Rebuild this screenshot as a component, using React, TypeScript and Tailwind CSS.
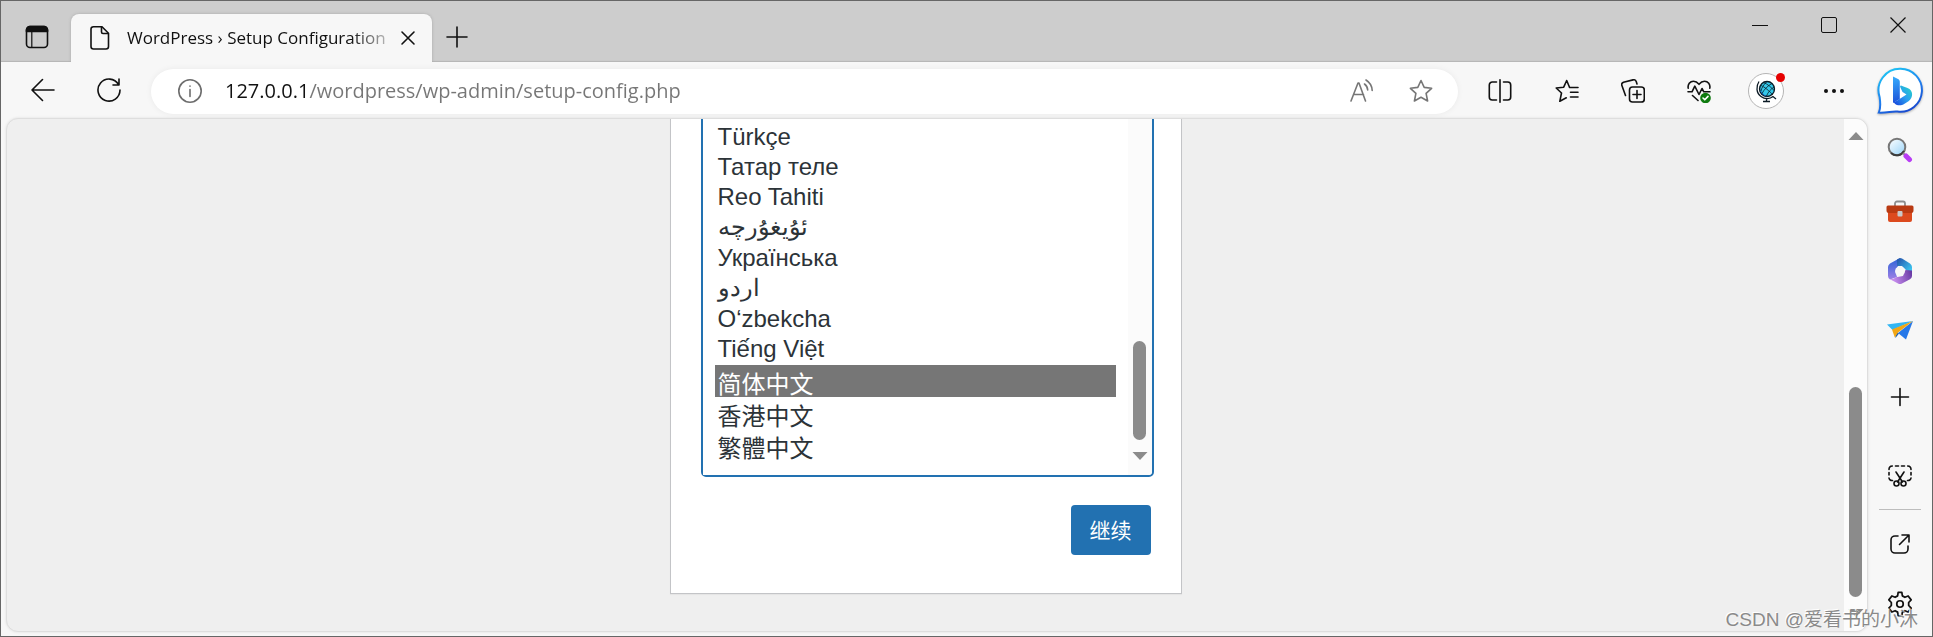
import type { ReactNode } from "react";

const LANGUAGES = [
  { code: "tr", name: "Türkçe", row: "h-[30px] leading-[30px]" },
  { code: "tt", name: "Татар теле", row: "h-[30px] leading-[30px]" },
  { code: "ty", name: "Reo Tahiti", row: "h-[30px] leading-[30px]" },
  { code: "ug", name: "ئۇيغۇرچە", row: "h-[31px] leading-[30px]" },
  { code: "uk", name: "Українська", row: "h-[30px] leading-[30px]" },
  { code: "ur", name: "اردو", row: "h-[31px] leading-[30px]" },
  { code: "uz", name: "O‘zbekcha", row: "h-[30px] leading-[30px]" },
  { code: "vi", name: "Tiếng Việt", row: "h-[30px] leading-[30px]" },
  { code: "zh-CN", name: "简体中文", row: "h-8 leading-7" },
  { code: "zh-HK", name: "香港中文", row: "h-8 leading-7" },
  { code: "zh-TW", name: "繁體中文", row: "h-8 leading-7" },
];

interface IconButtonProps {
  label: string;
  className?: string;
  children: ReactNode;
}

function IconButton({ label, className = "", children }: IconButtonProps) {
  return (
    <button
      type="button"
      aria-label={label}
      className={`flex shrink-0 items-center justify-center ${className}`}
    >
      {children}
    </button>
  );
}

interface LineIconProps {
  className?: string;
  children: ReactNode;
}

function LineIcon({ className = "size-6", children }: LineIconProps) {
  return (
    <svg
      viewBox="0 0 24 24"
      fill="none"
      stroke="currentColor"
      strokeWidth="1.6"
      strokeLinecap="round"
      strokeLinejoin="round"
      className={className}
    >
      {children}
    </svg>
  );
}

function TabStrip() {
  return (
    <header className="flex h-[61px] shrink-0 bg-[#cdcdcd] shadow-[inset_0_-2px_1px_-1px_#b5b5b5]">
      <IconButton label="Tab actions" className="mt-3 h-12 w-[70px] pl-[2px]">
        <LineIcon>
          <rect x="1.5" y="1.5" width="21" height="21" rx="3.5" />
          <path d="M1.500 6.500h21V5A3.500 3.500 0 0 0 19 1.500H5A3.500 3.500 0 0 0 1.500 5z" fill="currentColor" />
          <path d="M6.800 7v15.500" strokeWidth="1.200" />
        </LineIcon>
      </IconButton>

      <div className="mt-[13px] flex h-12 w-[361px] items-center rounded-t-lg bg-[#f7f7f7] pr-[10px] pl-[17px] shadow-[0_0_3px_#a8a8a8] [clip-path:inset(-4px_-4px_0_-4px)]">
        <LineIcon>
          <path d="M5.5 0.800h8.500l6.500 6.500v13.200A2.500 2.500 0 0 1 18 23H5.500A2.500 2.500 0 0 1 3 20.500V3.300A2.500 2.500 0 0 1 5.500 0.800z" />
          <path d="M13.500 1v5a1.500 1.500 0 0 0 1.500 1.500h5" />
        </LineIcon>
        <span className="ml-[15px] flex-1 overflow-hidden text-[17px] leading-6 whitespace-nowrap text-[#111] [mask-image:linear-gradient(90deg,#000_84%,transparent_102%)]">
          WordPress › Setup Configuration
        </span>
        <IconButton label="Close tab" className="size-7">
          <LineIcon className="size-6">
            <path d="M6 6l12 12M18 6L6 18" />
          </LineIcon>
        </IconButton>
      </div>

      <IconButton label="New tab" className="mt-3 h-12 w-[50px]">
        <LineIcon>
          <path d="M12 2v20M2 12h20" />
        </LineIcon>
      </IconButton>

      <div className="ml-auto flex h-12">
        <IconButton label="Minimize" className="w-[69px]">
          <svg viewBox="0 0 16 16" stroke="currentColor" className="size-4">
            <path d="M0 8.500h16" />
          </svg>
        </IconButton>
        <IconButton label="Maximize" className="w-[69px]">
          <svg viewBox="0 0 16 16" fill="none" stroke="currentColor" className="size-4">
            <rect x="0.500" y="0.500" width="15" height="15" rx="1.500" />
          </svg>
        </IconButton>
        <IconButton label="Close window" className="w-[69px]">
          <svg viewBox="0 0 16 16" stroke="currentColor" strokeWidth="1.200" className="size-4">
            <path d="M0.500 0.500l15 15M15.500 0.500l-15 15" />
          </svg>
        </IconButton>
      </div>
    </header>
  );
}

function GlobeAvatar() {
  return (
    <svg viewBox="0 0 24 24" fill="none" className="size-6">
      <circle cx="13" cy="10" r="7.500" fill="#35c9ea" stroke="#0b1a24" strokeWidth="1.300" />
      <path d="M6 9c1 4 4 8 8 8-4 1-8-3-8-8z" fill="#0a5fc4" />
      <path d="M7 6.500c3 1 9 6 11.500 9M9.500 3.500c4 1.500 8 5 10.500 8M18 4.500c-4 2-8 6-10 10M12.500 3c-3 3-5 6-5.500 9M20 8c-3 2-6 5-7.500 9" stroke="#0b1a24" strokeWidth="0.800" />
      <path d="M5 2.500C2 7 2 14 7 17.500c4 3 9 2.500 12 0L22 20M12.500 19.500V22M9 22.500h7" stroke="#0b1a24" strokeWidth="1.300" />
    </svg>
  );
}

function BingLogo() {
  return (
    <svg viewBox="0 0 46 48" fill="none" className="h-12 w-[46px] drop-shadow-[0_1px_1px_rgba(0,0,0,0.3)]">
      <defs>
        <linearGradient id="bubble" x1="8" y1="2" x2="30" y2="46" gradientUnits="userSpaceOnUse">
          <stop stopColor="#1cc8f5" />
          <stop offset="0.550" stopColor="#2080ee" />
          <stop offset="1" stopColor="#1747cf" />
        </linearGradient>
        <linearGradient id="stem" x1="16" y1="8" x2="22" y2="38" gradientUnits="userSpaceOnUse">
          <stop stopColor="#38b2ff" />
          <stop offset="1" stopColor="#1b4ad5" />
        </linearGradient>
        <linearGradient id="bowl" x1="16" y1="36" x2="36" y2="20" gradientUnits="userSpaceOnUse">
          <stop stopColor="#1746dc" />
          <stop offset="0.500" stopColor="#2a9df0" />
          <stop offset="1" stopColor="#23d6c4" />
        </linearGradient>
      </defs>
      <path
        d="M23.500 1.800a21.500 21.500 0 1 1-3 42.800c-5-0.600-11 1.400-18.700 1C4 41 3.500 36 2.600 30A21.500 21.500 0 0 1 23.500 1.800z"
        fill="#fff"
        stroke="url(#bubble)"
        strokeWidth="2"
      />
      <path d="M16 9.500l5 2.500c1.200 0.700 1.800 1.600 1.800 3V32L16 36z" fill="url(#stem)" />
      <path d="M16 32c0 6 6.500 8 11.500 4.800l4-2.600c5-3.600 5-11-1-13.200l-6-2.300c-1.300-0.400-1.600 0.600-1.200 1.600l2.200 4.800 4 2.400-9.700 6.300C17.500 35.200 16 34 16 32z" fill="url(#bowl)" />
    </svg>
  );
}

function Toolbar() {
  return (
    <div className="flex h-14 shrink-0 items-center pt-[2px]">
      <IconButton label="Back" className="h-10 w-[84px] pb-[2px]">
        <LineIcon>
          <path d="M23 12H1M11.500 1.500L1 12l10.500 10.500" />
        </LineIcon>
      </IconButton>
      <IconButton label="Refresh" className="mr-[18px] h-10 w-12 pb-[2px]">
        <LineIcon>
          <path d="M21.500 6.500A11 11 0 1 0 23 12M22 1v6h-6" />
        </LineIcon>
      </IconButton>

      <div className="flex h-[45px] flex-1 items-center rounded-full bg-white pr-2 pl-[27px] shadow-[0_0_6px_rgba(0,0,0,0.06)]">
        <LineIcon className="size-6 text-[#6d6d6d]">
          <circle cx="12" cy="12" r="11.200" />
          <path d="M12 10.500v7M12 7v0.200" />
        </LineIcon>
        <input
          type="text"
          aria-label="Address"
          defaultValue="127.0.0.1/wordpress/wp-admin/setup-config.php"
          className="ml-[23px] min-w-0 flex-1 bg-[linear-gradient(90deg,#111_83px,#767676_83px)] bg-clip-text text-xl leading-7 text-transparent outline-none"
        />
        <IconButton label="Read aloud" className="w-[59px] text-[#767676]">
          <LineIcon>
            <path d="M1 22L8 4h1l6.500 18M3.500 15.500h10M14.500 5c2 1.500 3 3.500 3.200 6M16 1c4 2.500 6 6 6.200 10.500" />
          </LineIcon>
        </IconButton>
        <IconButton label="Add to favorites" className="w-[59px] text-[#767676]">
          <LineIcon>
            <path d="M12 1.500l3.200 6.900 7.400 0.900-5.500 5.100 1.500 7.600L12 18.300 5.400 22l1.500-7.600L1.400 9.300l7.400-0.900z" />
          </LineIcon>
        </IconButton>
      </div>

      <div className="ml-2 flex">
        <IconButton label="Split screen" className="w-[67px]">
          <LineIcon>
            <path d="M12 0.800v22.400M8.500 3H4.300A3 3 0 0 0 1.300 6v12a3 3 0 0 0 3 3h4.200M15.500 3h4.200a3 3 0 0 1 3 3v12a3 3 0 0 1-3 3h-4.200" />
          </LineIcon>
        </IconButton>
        <IconButton label="Favorites" className="w-[67px]">
          <LineIcon>
            <path d="M14.500 8.300L11.700 1.500 8.700 8.200 1.200 9l5.300 5-1.700 8.300 6.500-3.500M14.500 8.500H23M15.500 13.200H23M15.500 18H23" />
          </LineIcon>
        </IconButton>
        <IconButton label="Collections" className="w-[66px]">
          <LineIcon>
            <rect x="8.500" y="8" width="14.800" height="15" rx="3" />
            <path d="M16 11.500v8M12 15.500h8M4.500 16.500L0.900 6.600C0.300 5 1 3.800 2.500 3.200L12 0.900c1.700-0.400 2.800 0.300 3.300 1.800l0.700 2.200" />
          </LineIcon>
        </IconButton>
        <IconButton label="Browser essentials" className="w-[66px]">
          <LineIcon>
            <path d="M1.200 9.200C0.500 5.500 3 2.300 6.500 2.300c2.300 0 4 1.200 5.500 3 1.500-1.800 3.200-3 5.500-3 3.500 0 6 3.200 5.300 6.900M1 12.800h4l2.800-5.600L12 15.500l3-6 1.800 3.300H23M5.500 16.500L11 21.500" />
            <circle cx="18.500" cy="19" r="5.300" fill="#0f7b0f" stroke="none" />
            <path d="M16 19l1.800 1.800 3.200-3.400" stroke="#fff" />
          </LineIcon>
        </IconButton>
        <IconButton label="Profile" className="w-[68px]">
          <span className="relative flex size-9 items-center justify-center rounded-full border border-[#b5b5b5] bg-white">
            <GlobeAvatar />
            <span className="absolute -top-px -right-[2px] size-[9px] rounded-full bg-[#e60000]" />
          </span>
        </IconButton>
        <IconButton label="Settings and more" className="w-[68px]">
          <svg viewBox="0 0 24 24" fill="currentColor" className="size-6">
            <circle cx="4" cy="12" r="2" />
            <circle cx="12" cy="12" r="2" />
            <circle cx="20" cy="12" r="2" />
          </svg>
        </IconButton>
        <IconButton label="Bing" className="w-16">
          <BingLogo />
        </IconButton>
      </div>
    </div>
  );
}

function LanguageForm() {
  return (
    <form className="w-[512px] shrink-0 border border-[#c3c4c7] bg-white pr-[27px] pb-[38px] pl-[30px] shadow-[0_1px_1px_rgba(0,0,0,0.04)]">
      <div className="flex rounded-[5px] border-2 border-[#2271b1] pt-3">
        <select
          size={11}
          defaultValue="zh-CN"
          aria-label="Language"
          className="h-[352px] min-w-0 flex-1 overflow-hidden bg-white bg-none px-3 py-0 text-2xl text-[#2c3338] outline-none"
        >
          {LANGUAGES.map((language) => (
            <option
              key={language.code}
              value={language.code}
              className={`${language.row} px-[3px] py-0 checked:bg-[linear-gradient(#767676,#767676)] checked:[-webkit-text-fill-color:#fff]`}
            >
              {language.name}
            </option>
          ))}
        </select>
        <div className="-mt-3 flex w-6 flex-col items-center justify-end rounded-r bg-[#fbfbfb] pb-[15px]">
          <div className="h-[99px] w-[13px] rounded-full bg-[#8b8b8b]" />
          <svg viewBox="0 0 16 8" fill="#8b8b8b" className="mt-3 h-2 w-4">
            <path d="M0.500 0h15L8 8z" />
          </svg>
        </div>
      </div>
      <div className="mt-7 flex justify-end pr-[3px]">
        <button
          type="button"
          className="h-[50px] w-20 rounded bg-[#2271b1] pt-[2px] text-[21px] leading-7 text-white"
        >
          继续
        </button>
      </div>
    </form>
  );
}

function Page() {
  return (
    <main className="flex min-w-0 flex-1 overflow-hidden rounded-xl border border-[#dedede] bg-[#efefef] shadow-[0_0_3px_rgba(0,0,0,0.1)]">
      <div className="flex flex-1 flex-col items-center justify-end pb-[37px] font-['Liberation_Sans','Noto_Sans_CJK_SC',sans-serif]">
        <LanguageForm />
      </div>
      <div className="flex w-[23px] flex-col items-center bg-[#fcfcfc] pt-[13px] pb-[14px]">
        <svg viewBox="0 0 16 8" fill="#8b8b8b" className="h-2 w-4">
          <path d="M0.500 8h15L8 0z" />
        </svg>
        <div className="mt-auto h-[210px] w-[13px] rounded-full bg-[#8b8b8b]" />
        <svg viewBox="0 0 16 8" fill="#8b8b8b" className="mt-3 h-2 w-4">
          <path d="M0.500 0h15L8 8z" />
        </svg>
      </div>
    </main>
  );
}

function Sidebar() {
  return (
    <aside className="flex w-16 flex-col items-center pt-[14px] pb-[10px]">
      <IconButton label="Search" className="h-9">
        <svg viewBox="0 0 26 26" fill="none" className="size-[26px]">
          <defs>
            <linearGradient id="lens" x1="4" y1="4" x2="16" y2="18" gradientUnits="userSpaceOnUse">
              <stop stopColor="#f1faff" />
              <stop offset="1" stopColor="#9ed5f8" />
            </linearGradient>
          </defs>
          <circle cx="10" cy="10" r="8.300" fill="url(#lens)" stroke="#777" strokeWidth="2" />
          <path d="M4 16A8.300 8.300 0 0 0 17 14" stroke="#3c3c3c" strokeWidth="2" />
          <path d="M16 16l2.500 2.500" stroke="#888" strokeWidth="2" />
          <path d="M19 19l3.500 3.500" stroke="#b83df5" strokeWidth="5" strokeLinecap="round" />
        </svg>
      </IconButton>
      <IconButton label="Shopping" className="mt-[25px] h-9">
        <svg viewBox="0 0 28 28" className="size-7">
          <path d="M9 9V6.500a2 2 0 0 1 2-2h6a2 2 0 0 1 2 2V9" fill="none" stroke="#8d8d8d" strokeWidth="1.800" />
          <path d="M2 15h24v8a2 2 0 0 1-2 2H4a2 2 0 0 1-2-2z" fill="#dc4a1e" />
          <path d="M2 8.500h24a1.500 1.500 0 0 1 1.500 1.500v3.500A2.500 2.500 0 0 1 25 16H3a2.500 2.500 0 0 1-2.500-2.500V10A1.500 1.500 0 0 1 2 8.500z" fill="#b93a12" />
          <rect x="11.500" y="14" width="5" height="5.500" rx="1" fill="#c9c9c9" />
        </svg>
      </IconButton>
      <IconButton label="Microsoft 365" className="mt-6 h-9">
        <svg viewBox="0 0 24 26" className="h-[26px] w-6">
          <defs>
            <linearGradient id="m365a" x1="4" y1="2" x2="4" y2="24" gradientUnits="userSpaceOnUse">
              <stop stopColor="#3567d8" />
              <stop offset="1" stopColor="#ad82e8" />
            </linearGradient>
            <linearGradient id="m365b" x1="10" y1="2" x2="24" y2="14" gradientUnits="userSpaceOnUse">
              <stop stopColor="#275bb0" />
              <stop offset="1" stopColor="#3fd2f7" />
            </linearGradient>
            <linearGradient id="m365c" x1="6" y1="22" x2="24" y2="16" gradientUnits="userSpaceOnUse">
              <stop stopColor="#c58cec" />
              <stop offset="1" stopColor="#6a3ba5" />
            </linearGradient>
          </defs>
          <path d="M12 0L2 5.500Q0 7 0 9v9q0 2 2 3.500l7-2.500-2-6 3-5z" fill="url(#m365a)" />
          <path d="M12 0l-3 1.500V8l5 0 4 4 6 3V9q0-2-2-3.500L14 0.600Q13 0 12 0z" fill="url(#m365b)" />
          <path d="M24 12.500V18q0 2-2 3.200l-8 4.300q-2 1-4 0l-8-4.300q3 0.500 6-2l7-1.200 2.500-6z" fill="url(#m365c)" />
          <path d="M12 8.300l4 2.300v4.800l-4 2.300-4-2.300v-4.800z" fill="#f7f7f7" stroke="#f7f7f7" strokeLinejoin="round" />
        </svg>
      </IconButton>
      <IconButton label="Drop" className="mt-6 h-9">
        <svg viewBox="0 0 26 20" className="h-5 w-[26px]">
          <path d="M0 3.500L26 0 5.500 9z" fill="#32b5f2" />
          <path d="M26 0L19 18.500 11 12z" fill="#2678e8" />
          <path d="M8 10l4 2.500L8.500 17z" fill="#175cb5" />
          <path d="M26 0L5 8.500l2.800 8L11 11.500z" fill="#f2a614" />
        </svg>
      </IconButton>
      <IconButton label="Customize" className="mt-[30px] h-9">
        <LineIcon>
          <path d="M12 3.500v17M3.500 12h17" />
        </LineIcon>
      </IconButton>
      <IconButton label="Screenshot" className="mt-auto h-9">
        <LineIcon>
          <path d="M4.500 16.500A3 3 0 0 1 1 14M1 8.500v2.500M1 5.500A3.500 3.500 0 0 1 4.300 2M7.500 2h3M13.500 2h3M19.700 2A3.500 3.500 0 0 1 23 5.500M23 8.500v2.500M23 14a3 3 0 0 1-3.500 2.500M8 8l6.500 10M16 8L9.500 18" />
          <circle cx="8.500" cy="19.500" r="2.500" />
          <circle cx="15.500" cy="19.500" r="2.500" />
        </LineIcon>
      </IconButton>
      <hr className="mt-[15px] w-[42px] border-[#bdbdbd]" />
      <IconButton label="Open in new window" className="mt-4 h-9">
        <LineIcon>
          <path d="M10 4H7a4 4 0 0 0-4 4v9a4 4 0 0 0 4 4h9a4 4 0 0 0 4-4v-3M14 3h7v7M21 3L11.500 12.500" />
        </LineIcon>
      </IconButton>
      <IconButton label="Settings" className="mt-6 h-9">
        <LineIcon className="size-[26px]">
          <path d="M9.800 4.500L10.300 1.300h3.400l0.500 3.200 2.300 1.300 3-1.200 2.800 3.600-2.300 2.400v2.800l2.300 2.400-2.800 3.600-3-1.200-2.300 1.300-0.500 3.200h-3.400l-0.500-3.200-2.300-1.300-3 1.200-2.800-3.600 2.300-2.400v-2.800L1.700 8.200l2.800-3.600 3 1.200z" />
          <circle cx="12" cy="12" r="3" />
        </LineIcon>
      </IconButton>
    </aside>
  );
}

export default function App() {
  return (
    <div className="relative flex h-screen flex-col overflow-hidden border border-[#666] bg-[#f7f7f7] font-['Open_Sans','Noto_Sans_CJK_SC',sans-serif] text-[#111]">
      <TabStrip />
      <Toolbar />
      <div className="flex min-h-0 flex-1 pb-[4px] pl-[5px]">
        <Page />
        <Sidebar />
      </div>
      <p className="pointer-events-none absolute right-[14px] bottom-[2px] font-['Liberation_Sans','Noto_Sans_CJK_SC',sans-serif] text-[19px] leading-7 text-[#8a8a8a] [text-shadow:-1px_-1px_0_#fff]">
        CSDN @爱看书的小沐
      </p>
    </div>
  );
}
